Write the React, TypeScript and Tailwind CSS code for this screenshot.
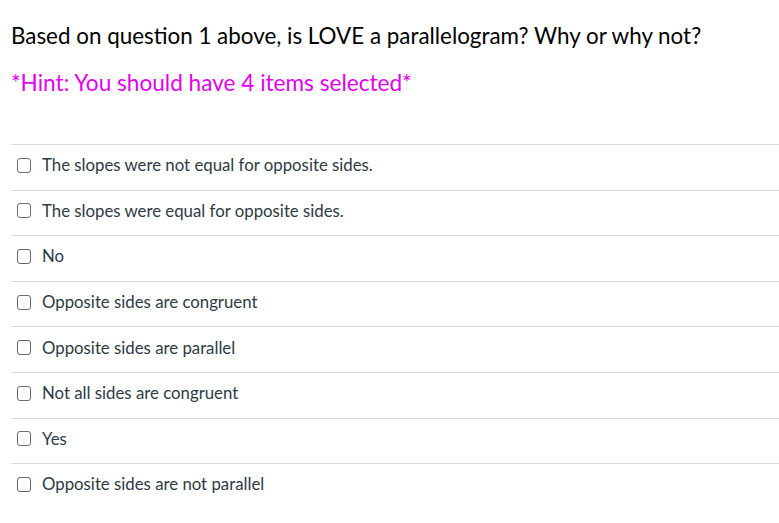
import React from "react";

const options = [
  "The slopes were not equal for opposite sides.",
  "The slopes were equal for opposite sides.",
  "No",
  "Opposite sides are congruent",
  "Opposite sides are parallel",
  "Not all sides are congruent",
  "Yes",
  "Opposite sides are not parallel",
];

export default function App() {
  return (
    <div className="bg-white w-[779px] h-[523px] overflow-hidden pl-[11px] text-[#2d3b45]" style={{ fontFamily: "Lato, 'Noto Sans', sans-serif" }}>
      <div className="pt-[19px] text-[22.4px] leading-[33px] text-black">
        Based on question 1 above, is LOVE a parallelogram? Why or why not?
      </div>
      <div className="mt-[14px] text-[22.6px] leading-[33px] text-[#e100f0]">
        *Hint: You should have 4 items selected*
      </div>
      <div className="mt-[45px]">
        {options.map((o) => (
          <div key={o} className="h-[45.6px] border-t border-[#dcdcdc] flex items-center">
            <span className="ml-[6px] -mt-[4px] w-[14px] h-[15px] border border-[#6a6a6a] rounded-[3px] shrink-0" />
            <span className="ml-[11px] text-[16.8px] leading-[24px] -mt-[4px]">{o}</span>
          </div>
        ))}
      </div>
    </div>
  );
}
